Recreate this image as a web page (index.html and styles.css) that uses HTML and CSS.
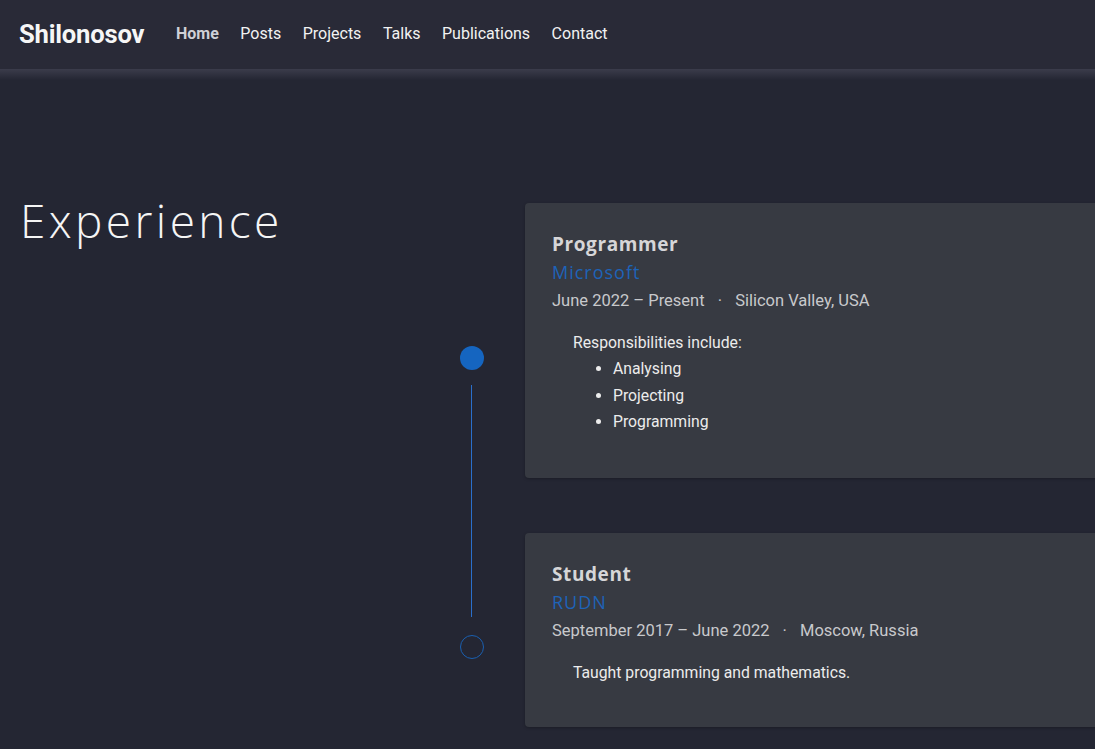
FILE: index.html
```html
<!DOCTYPE html>
<html lang="en">
<head>
<meta charset="utf-8">
<title>Shilonosov</title>
<link rel="stylesheet" href="styles.css">
</head>
<body>
<header class="navbar">
  <a class="brand" href="#">Shilonosov</a>
  <nav class="nav-links">
    <a class="nav-link active" href="#">Home</a>
    <a class="nav-link" href="#">Posts</a>
    <a class="nav-link" href="#">Projects</a>
    <a class="nav-link" href="#">Talks</a>
    <a class="nav-link" href="#">Publications</a>
    <a class="nav-link" href="#">Contact</a>
  </nav>
</header>
<div class="nav-shadow"></div>
<main class="section">
  <h1 class="section-heading">Experience</h1>
  <div class="timeline">
    <div class="dot filled"></div>
    <div class="line"></div>
    <div class="dot hollow"></div>
  </div>
  <div class="cards">
    <article class="card first">
      <h3 class="card-title">Programmer</h3>
      <div class="company">Microsoft</div>
      <div class="meta">June 2022 – Present <span class="sep">·</span> Silicon Valley, USA</div>
      <div class="desc">
        <p>Responsibilities include:</p>
        <ul>
          <li>Analysing</li>
          <li>Projecting</li>
          <li>Programming</li>
        </ul>
      </div>
    </article>
    <article class="card second">
      <h3 class="card-title">Student</h3>
      <div class="company">RUDN</div>
      <div class="meta">September 2017 – June 2022 <span class="sep">·</span> Moscow, Russia</div>
      <div class="desc">
        <p>Taught programming and mathematics.</p>
      </div>
    </article>
  </div>
</main>
</body>
</html>
```

FILE: styles.css
```css
html, body {
  margin: 0;
  padding: 0;
}
body {
  background: #242633;
  font-family: Roboto, "Liberation Sans", sans-serif;
  color: #e6e6e6;
  overflow: hidden;
  height: 749px;
}
a { text-decoration: none; }

.navbar {
  height: 69px;
  box-sizing: border-box;
  padding: 0 19px 2px;
  background: #292a37;
  display: flex;
  align-items: center;
}
.brand {
  font-weight: 700;
  font-size: 25.6px;
  color: #f6f6f6;
  letter-spacing: -0.2px;
}
.nav-links {
  display: flex;
  margin-left: 21px;
}
.nav-link {
  font-size: 16px;
  color: #f2f2f2;
  padding: 0 10.75px;
}
.nav-link.active {
  font-weight: 700;
  color: #cfd0d6;
}
.nav-shadow {
  height: 11px;
  background: linear-gradient(#3b3c4b, #242633);
}

.section {
  display: grid;
  grid-template-columns: 399px 48px 640px;
  column-gap: 29px;
  padding: 0 0 0 20px;
  margin-top: 123px;
}
.section-heading {
  margin: 0;
  font-family: "Open Sans", sans-serif;
  font-weight: 300;
  font-size: 46px;
  line-height: 1.2;
  color: #f5f5f5;
  margin-top: -10px;
  letter-spacing: 3.4px;
}

.timeline {
  display: flex;
  flex-direction: column;
  align-items: center;
  padding-top: 143px;
}
.dot {
  width: 24px;
  height: 24px;
  border-radius: 50%;
  box-sizing: border-box;
  flex: none;
}
.dot.filled { background: #1565c0; }
.dot.hollow { border: 1.5px solid #1a5fb0; }
.line {
  flex: none;
  width: 0;
  height: 232px;
  border-left: 1px solid #2a6fcc;
  margin: 15px 1px 18px 0;
}

.cards {
  display: flex;
  flex-direction: column;
  gap: 55px;
}
.card {
  background: #373a42;
  border-radius: 4px;
  box-sizing: border-box;
  padding: 29px 27px 27px;
  box-shadow: 0 1px 3px rgba(0,0,0,0.25);
}
.card.first { height: 275px; }
.card.second { height: 194px; }
.card-title {
  margin: 0;
  font-family: "Open Sans", sans-serif;
  font-weight: 700;
  font-size: 19px;
  line-height: 24px;
  color: #d6d6d8;
  letter-spacing: 0.6px;
}
.company {
  font-family: "Open Sans", sans-serif;
  font-size: 18px;
  line-height: 28px;
  color: #1e63b8;
  margin-top: 2px;
  letter-spacing: 1px;
}
.meta {
  font-size: 16.5px;
  line-height: 28px;
  color: #c8c9cc;
  margin-top: 1px;
}
.sep {
  margin: 0 9px;
}
.desc {
  padding-left: 21px;
  margin-top: 14px;
  font-size: 15.75px;
  color: #ececec;
}
.desc p {
  margin: 0;
  line-height: 27px;
}
.desc ul {
  margin: 0;
  padding-left: 40px;
}
.desc li {
  line-height: 26.5px;
}
```
